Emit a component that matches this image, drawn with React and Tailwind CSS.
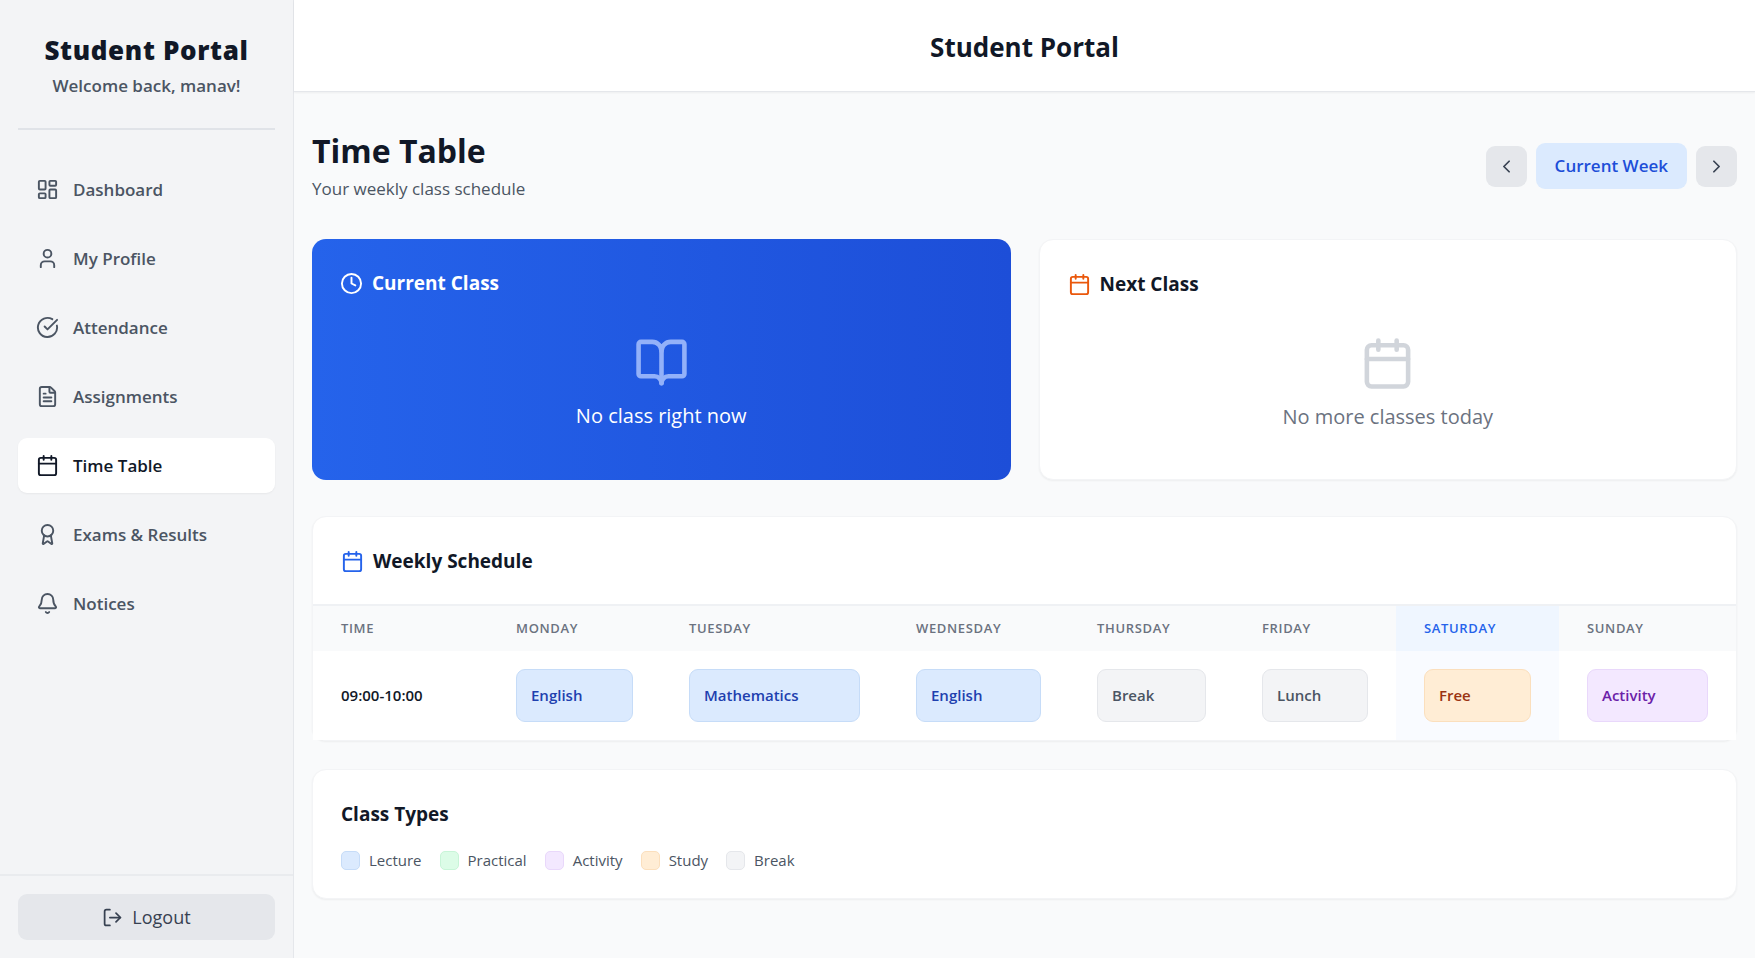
import { useState } from 'react';
import {
  Award,
  Bell,
  BookOpen,
  Calendar,
  ChevronLeft,
  ChevronRight,
  CircleCheckBig,
  Clock,
  FileText,
  LayoutDashboard,
  LogOut,
  User,
} from 'lucide-react';

const navItems = [
  { name: 'Dashboard', icon: LayoutDashboard },
  { name: 'My Profile', icon: User },
  { name: 'Attendance', icon: CircleCheckBig },
  { name: 'Assignments', icon: FileText },
  { name: 'Time Table', icon: Calendar },
  { name: 'Exams & Results', icon: Award },
  { name: 'Notices', icon: Bell },
];

const days = [
  { name: 'Monday', width: 'w-[173px]' },
  { name: 'Tuesday', width: 'w-[227px]' },
  { name: 'Wednesday', width: 'w-[181px]' },
  { name: 'Thursday', width: 'w-[165px]' },
  { name: 'Friday', width: 'w-[162px]' },
  { name: 'Saturday', width: 'w-[163px]' },
  { name: 'Sunday', width: 'w-[177px]' },
];

const today = 'Saturday';

const schedule = [
  {
    time: '09:00-10:00',
    classes: [
      { subject: 'English', type: 'lecture' },
      { subject: 'Mathematics', type: 'lecture' },
      { subject: 'English', type: 'lecture' },
      { subject: 'Break', type: 'break' },
      { subject: 'Lunch', type: 'break' },
      { subject: 'Free', type: 'study' },
      { subject: 'Activity', type: 'activity' },
    ],
  },
];

const classTypes = [
  { label: 'Lecture', type: 'lecture' },
  { label: 'Practical', type: 'practical' },
  { label: 'Activity', type: 'activity' },
  { label: 'Study', type: 'study' },
  { label: 'Break', type: 'break' },
];

const getTypeColor = (type) => {
  switch (type) {
    case 'lecture':
      return 'bg-[#dbeafe] text-[#1e40af] border-[#c6dcf8]';
    case 'practical':
      return 'bg-[#dcfce7] text-[#166534] border-[#c8f5d8]';
    case 'activity':
      return 'bg-[#f3e8ff] text-[#6b21a8] border-[#e9d8fb]';
    case 'study':
      return 'bg-[#ffedd5] text-[#9a3412] border-[#fbdfbd]';
    default:
      return 'bg-[#f3f4f6] text-[#4b5563] border-[#e5e7eb]';
  }
};

const Sidebar = ({ active, onSelect }) => {
  return (
    <aside className="flex w-[294px] shrink-0 flex-col border-r border-[#e5e7eb] bg-[#f3f4f6]">
      <div className="mx-[18px] border-b-2 border-[#e0e3e8] pt-8 pb-7 text-center">
        <h2 className="text-[26px] leading-9 font-extrabold tracking-wide text-[#111827]">Student Portal</h2>
        <p className="mt-1 text-[17px] leading-7 font-semibold text-[#4b5563]">Welcome back, manav!</p>
      </div>

      <nav className="flex flex-1 flex-col gap-[14px] px-[18px] pt-8">
        {navItems.map(({ name, icon: Icon }) => (
          <a
            key={name}
            href="#"
            onClick={() => onSelect(name)}
            className={`flex h-[55px] items-center gap-[14px] rounded-[9px] px-[18px] text-[17px] font-semibold ${
              active === name ? 'bg-white text-[#111827] shadow-xs' : 'text-[#4b5563]'
            }`}
          >
            <Icon size={23} />
            {name}
          </a>
        ))}
      </nav>

      <div className="border-t-2 border-[#e9ebee] p-[18px]">
        <button className="flex h-[46px] w-full items-center justify-center gap-[9px] rounded-[9px] bg-[#e5e7eb] text-[18px] text-[#374151]">
          <LogOut size={21} />
          Logout
        </button>
      </div>
    </aside>
  );
};

const WeekNavigation = () => {
  return (
    <div className="flex items-center gap-[9px]">
      <button aria-label="Previous week" className="rounded-[9px] bg-[#e5e7eb] p-[10px] text-[#374151]">
        <ChevronLeft size={21} />
      </button>
      <button className="h-[46px] rounded-[9px] bg-[#dbeafe] px-[19px] text-[17px] font-semibold text-[#1d4ed8]">
        Current Week
      </button>
      <button aria-label="Next week" className="rounded-[9px] bg-[#e5e7eb] p-[10px] text-[#374151]">
        <ChevronRight size={21} />
      </button>
    </div>
  );
};

const ScheduleTable = () => {
  return (
    <table className="w-full table-fixed">
      <thead className="bg-[#f9fafb]">
        <tr className="h-[45px]">
          <th className="w-[175px] px-7 text-left text-[13px] font-semibold tracking-wider text-[#6b7280] uppercase">
            Time
          </th>
          {days.map(({ name, width }) => (
            <th
              key={name}
              className={`px-7 text-left text-[13px] font-semibold tracking-wider uppercase ${width} ${
                name === today ? 'bg-[#eff6ff] text-[#2563eb]' : 'text-[#6b7280]'
              }`}
            >
              {name}
            </th>
          ))}
        </tr>
      </thead>
      <tbody className="bg-white">
        {schedule.map((row) => (
          <tr key={row.time}>
            <td className="px-7 text-[15px] font-semibold whitespace-nowrap text-[#111827]">{row.time}</td>
            {row.classes.map((item, index) => (
              <td
                key={days[index].name}
                className={`px-7 py-[18px] ${days[index].name === today ? 'bg-[#f9fbff]' : ''}`}
              >
                <div
                  className={`flex h-[53px] items-center rounded-[9px] border px-[14px] text-[15px] font-semibold ${getTypeColor(item.type)}`}
                >
                  {item.subject}
                </div>
              </td>
            ))}
          </tr>
        ))}
      </tbody>
    </table>
  );
};

const App = () => {
  const [active, setActive] = useState('Time Table');

  return (
    <div className="flex min-h-screen bg-[#f9fafb] font-['Open_Sans','Noto_Sans',sans-serif]">
      <Sidebar active={active} onSelect={setActive} />

      <div className="flex min-w-0 flex-1 flex-col">
        <header className="flex h-[92px] items-center justify-center border-b border-[#e5e7eb] bg-white pt-1 shadow-xs">
          <h1 className="text-[26px] font-bold text-[#111827]">Student Portal</h1>
        </header>

        <main className="flex-1 px-[18px] pt-9">
          <div className="flex items-center justify-between">
            <div>
              <h1 className="text-[32px] leading-[46px] font-bold text-[#111827]">Time Table</h1>
              <p className="text-[17px] leading-[30px] text-[#4b5563]">Your weekly class schedule</p>
            </div>
            <WeekNavigation />
          </div>

          <div className="mt-[35px] grid grid-cols-2 gap-7">
            <section className="rounded-[14px] bg-linear-to-r from-[#2563eb] to-[#1d4ed8] p-7 text-white">
              <h2 className="flex items-center gap-[9px] text-[19px] leading-8 font-bold">
                <Clock size={23} />
                Current Class
              </h2>
              <div className="flex flex-col items-center pt-9">
                <BookOpen size={55} className="text-[#93b1f9]" />
                <p className="mt-2 text-[20px] leading-9">No class right now</p>
              </div>
            </section>

            <section className="rounded-[14px] border border-[#f3f4f6] bg-white px-7 pt-7 pb-11 shadow-xs">
              <h2 className="flex items-center gap-[9px] text-[19px] leading-8 font-bold text-[#111827]">
                <Calendar size={23} className="text-[#ea580c]" />
                Next Class
              </h2>
              <div className="flex flex-col items-center pt-9">
                <Calendar size={55} className="text-[#d1d5db]" />
                <p className="mt-2 text-[20px] leading-9 text-[#6b7280]">No more classes today</p>
              </div>
            </section>
          </div>

          <section className="mt-9 rounded-[14px] border border-[#f3f4f6] bg-white shadow-xs">
            <div className="border-b-2 border-[#eff1f4] px-7 pt-7 pb-[27px]">
              <h2 className="flex items-center gap-[9px] text-[19px] leading-8 font-bold text-[#111827]">
                <Calendar size={23} className="text-[#2563eb]" />
                Weekly Schedule
              </h2>
            </div>
            <ScheduleTable />
          </section>

          <section className="mt-7 rounded-[14px] border border-[#f3f4f6] bg-white px-7 pt-7 pb-6 shadow-xs">
            <h3 className="text-[19px] leading-8 font-bold text-[#111827]">Class Types</h3>
            <ul className="mt-4 flex flex-wrap gap-[18px]">
              {classTypes.map(({ label, type }) => (
                <li key={type} className="flex items-center gap-[9px]">
                  <span className={`size-[19px] rounded-[5px] border ${getTypeColor(type)}`} />
                  <span className="text-[15px] leading-7 text-[#4b5563]">{label}</span>
                </li>
              ))}
            </ul>
          </section>
        </main>
      </div>
    </div>
  );
};

export default App;
